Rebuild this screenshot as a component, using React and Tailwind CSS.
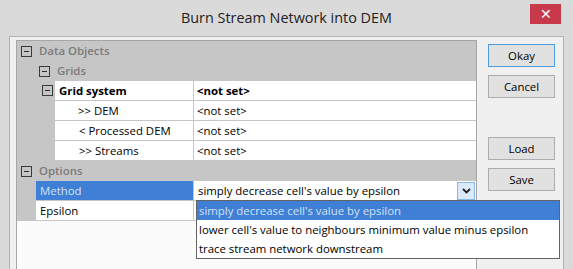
import React from 'react';

function MinusBox() {
    return (
        <div className="w-[11px] h-[11px] border border-[#3a3a3a] flex items-center justify-center shrink-0">
            <div className="w-[5px] h-px bg-[#2a2a2a]" />
        </div>
    );
}

function Category({ label, indent }) {
    return (
        <div className={`h-[20px] flex items-center bg-[#c6c6c6] ${indent}`}>
            <MinusBox />
            <span className="ml-[7px] font-semibold text-[#7b7b7b]">{label}</span>
        </div>
    );
}

export default function App() {
    const options = [
        "simply decrease cell's value by epsilon",
        "lower cell's value to neighbours minimum value minus epsilon",
        'trace stream network downstream',
    ];

    return (
        <div className="w-[573px] h-[269px] overflow-hidden bg-[#dadada] flex flex-col font-['Open_Sans','Noto_Sans',sans-serif] text-[11.4px] leading-none text-black">
            {/* Title bar */}
            <div className="h-[36px] flex shrink-0">
                <div className="w-[43px]" />
                <div className="flex-1 flex items-center justify-center text-[14.4px] text-[#222]">Burn Stream Network into DEM</div>
                <div className="w-[43px] pt-[4px]">
                    <div className="w-[31px] h-[20px] bg-[#c8394c] flex items-center justify-center text-white text-[14px]">✕</div>
                </div>
            </div>

            {/* Client area */}
            <div className="flex-1 mx-[9px] border-l border-t border-r border-[#b2b2b2] bg-[#f0f0f0] flex pl-[6px] pt-[3px]">
                {/* Property grid */}
                <div className="relative w-[461px] h-[240px] shrink-0 border border-[#a6a6a6] bg-[#fbfbfb] flex flex-col">
                    <Category label="Data Objects" indent="pl-[4px]" />
                    <Category label="Grids" indent="pl-[22px]" />

                    <div className="h-[20px] flex bg-[#c6c6c6] border-b border-[#c6c6c6]">
                        <div className="w-[38px] shrink-0 flex items-center pl-[25px]">
                            <MinusBox />
                        </div>
                        <div className="w-[138px] shrink-0 bg-white flex items-center pl-[4px] font-bold">Grid system</div>
                        <div className="w-px bg-[#c6c6c6]" />
                        <div className="flex-1 bg-white flex items-center pl-[3px] font-bold">&lt;not set&gt;</div>
                    </div>

                    {[
                        ['>> DEM', 'pl-[23px]'],
                        ['< Processed DEM', 'pl-[24px]'],
                        ['>> Streams', 'pl-[24px]'],
                    ].map(([label, pad]) => (
                        <div key={label} className="h-[20px] flex bg-[#c6c6c6] border-b border-[#c6c6c6]">
                            <div className="w-[38px] shrink-0" />
                            <div className={`w-[138px] shrink-0 bg-white flex items-center ${pad}`}>{label}</div>
                            <div className="w-px bg-[#c6c6c6]" />
                            <div className="flex-1 bg-white flex items-center pl-[3px]">&lt;not set&gt;</div>
                        </div>
                    ))}

                    <Category label="Options" indent="pl-[4px]" />

                    {/* Method */}
                    <div className="h-[20px] flex bg-[#c6c6c6] border-b border-[#c6c6c6]">
                        <div className="w-[19px] shrink-0" />
                        <div className="w-[157px] shrink-0 bg-[#3f7fd6] text-[#d4e2f4] flex items-center pl-[4px]">Method</div>
                        <div className="w-px bg-[#c6c6c6]" />
                        <div className="flex-1 bg-white flex items-center pl-[4px]">
                            <span className="flex-1">simply decrease cell's value by epsilon</span>
                            <div className="w-[18px] h-[18px] mt-[1px] mr-[1px] bg-[#dbeaf8] border border-[#86b8ea] flex items-center justify-center">
                                <svg width="9" height="6" viewBox="0 0 9 6">
                                    <polyline points="1,1 4.5,4.5 8,1" fill="none" stroke="#222" strokeWidth="1.8" />
                                </svg>
                            </div>
                        </div>
                    </div>

                    {/* Epsilon */}
                    <div className="h-[20px] flex bg-[#c6c6c6] border-b border-[#c6c6c6]">
                        <div className="w-[19px] shrink-0" />
                        <div className="w-[157px] shrink-0 bg-white flex items-center pl-[4px]">Epsilon</div>
                        <div className="w-px bg-[#c6c6c6]" />
                        <div className="flex-1 bg-white" />
                    </div>

                    {/* Open dropdown list */}
                    <div className="absolute left-[179px] top-[159px] w-[364px] border border-[#646464] bg-white z-10">
                        {options.map((o, i) => (
                            <div key={o} className={`h-[19px] flex items-center pl-[2px] ${i === 0 ? 'bg-[#3f7fd6] text-[#d4e2f4]' : ''}`}>
                                {o}
                            </div>
                        ))}
                    </div>
                </div>

                {/* Buttons */}
                <div className="ml-[11px] pt-[4px] flex flex-col">
                    <button className="w-[67px] h-[23px] bg-[#e1e1e1] border border-[#4f9be0] flex items-center justify-center">Okay</button>
                    <button className="w-[67px] h-[23px] mt-[8px] bg-[#e1e1e1] border border-[#adadad] flex items-center justify-center">Cancel</button>
                    <button className="w-[67px] h-[23px] mt-[39px] bg-[#e1e1e1] border border-[#adadad] flex items-center justify-center">Load</button>
                    <button className="w-[67px] h-[23px] mt-[8px] bg-[#e1e1e1] border border-[#adadad] flex items-center justify-center">Save</button>
                </div>
            </div>
        </div>
    );
}
